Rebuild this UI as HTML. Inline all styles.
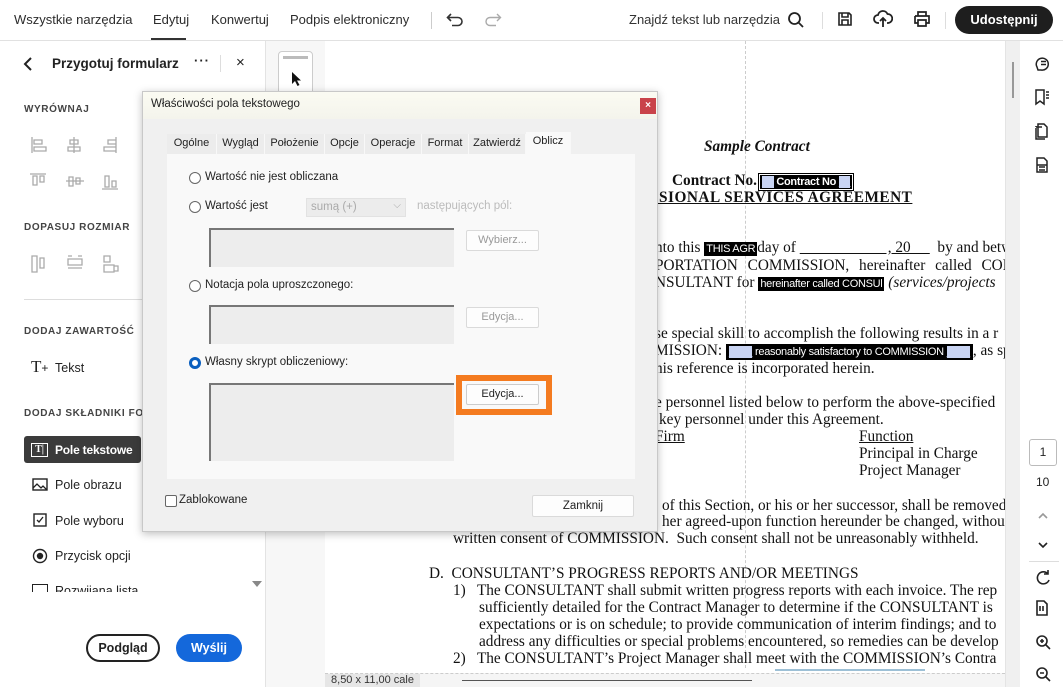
<!DOCTYPE html>
<html><head><meta charset="utf-8"><style>
*{box-sizing:border-box;margin:0;padding:0}
body{width:1063px;height:687px;overflow:hidden;position:relative;background:#fff;font-family:"Liberation Sans",sans-serif;color:#222}
.a{position:absolute;white-space:nowrap}
.top{position:absolute;left:0;top:0;width:1063px;height:41px;border-bottom:1px solid #e1e1e1;background:#fff}
.nav{font-size:13px;top:12px;color:#2c2c2c}
.lbl{font-size:10px;font-weight:bold;letter-spacing:.6px;color:#444}
.li{font-size:12.5px;color:#222}
.doc{position:absolute;left:325px;top:41px;width:680px;height:632px;overflow:hidden;background:#fff}
.doc .a{font-family:"Liberation Serif",serif;font-size:15.3px;color:#111}
.fld{background:#000;color:#fff;font-family:"Liberation Sans",sans-serif!important;font-size:11px!important;padding:1px 2px;letter-spacing:-.3px}
.dlg{position:absolute;left:142px;top:91px;width:516px;height:441px;background:#f0f0f0;border:1px solid #c8c8c8;box-shadow:0 2px 8px rgba(0,0,0,.25);font-size:11px;color:#222}
.tab{position:absolute;top:42px;height:20px;font-size:11px;padding-top:3px;background:#ececec;border-right:1px solid #f8f8f8;text-align:center}
.btn{position:absolute;background:#fdfdfd;border:1px solid #dadada;border-radius:2px;font-size:11px;text-align:center;color:#999}
.box{position:absolute;background:#ededed;border-top:2px solid #777;border-left:2px solid #777}
.rad{position:absolute;width:12px;height:12px;border:1px solid #666;border-radius:50%;background:#fff}
.ic{position:absolute}
</style></head><body>

<div class="top">
 <div class="a nav" style="left:14px">Wszystkie narzędzia</div>
 <div class="a nav" style="left:153px">Edytuj</div>
 <div class="a" style="left:151px;top:38px;width:35px;height:2px;background:#333"></div>
 <div class="a nav" style="left:211px">Konwertuj</div>
 <div class="a nav" style="left:290px">Podpis elektroniczny</div>
 <div class="a" style="left:431px;top:12px;width:1px;height:17px;background:#ccc"></div>
 <svg class="ic" style="left:446px;top:12px" width="18" height="16" viewBox="0 0 18 16"><path d="M5 2 L1.5 5.5 L5 9 M1.5 5.5 H12 a4 4 0 0 1 0 8 H6" fill="none" stroke="#333" stroke-width="1.6"/></svg>
 <svg class="ic" style="left:484px;top:12px" width="18" height="16" viewBox="0 0 18 16"><path d="M13 2 L16.5 5.5 L13 9 M16.5 5.5 H6 a4 4 0 0 0 0 8 H12" fill="none" stroke="#aaa" stroke-width="1.4"/></svg>
 <div class="a nav" style="left:629px;color:#333">Znajdź tekst lub narzędzia</div>
 <svg class="ic" style="left:787px;top:11px" width="18" height="18" viewBox="0 0 18 18"><circle cx="7.5" cy="7.5" r="5.5" fill="none" stroke="#222" stroke-width="1.8"/><path d="M11.5 11.5 L16 16" stroke="#222" stroke-width="1.8"/></svg>
 <div class="a" style="left:822px;top:12px;width:1px;height:17px;background:#ddd"></div>
 <svg class="ic" style="left:837px;top:11px" width="16" height="16" viewBox="0 0 16 16"><path d="M2 2h10l2 2v10H2z M5 2v4h6V2 M5 14V9h6v5" fill="none" stroke="#222" stroke-width="1.6"/></svg>
 <svg class="ic" style="left:873px;top:10px" width="20" height="18" viewBox="0 0 20 18"><path d="M6 13H5a4 4 0 0 1 0-8 5 5 0 0 1 9.5-1A4 4 0 0 1 15 13h-1 M10 17V8 M7 11l3-3 3 3" fill="none" stroke="#222" stroke-width="1.8"/></svg>
 <svg class="ic" style="left:913px;top:10px" width="18" height="18" viewBox="0 0 18 18"><path d="M5 6V2h8v4 M2 6h14v7h-3 M5 13H2V6 M5 10h8v6H5z" fill="none" stroke="#222" stroke-width="1.7"/></svg>
 <div class="a" style="left:945px;top:12px;width:1px;height:17px;background:#ddd"></div>
 <div class="a" style="left:955px;top:6px;width:98px;height:28px;border-radius:14px;background:#1e1e1e;color:#fff;font-size:13px;font-weight:bold;text-align:center;line-height:27px">Udostępnij</div>
</div>

<!-- left panel -->
<div class="a" style="left:265px;top:41px;width:60px;height:646px;background:#f7f7f7;border-left:1px solid #e3e3e3"></div>
<div class="a" style="left:278px;top:51px;width:35px;height:50px;border:1px solid #ccc;border-radius:4px;background:#fff"></div>
<div class="a" style="left:283px;top:56px;width:25px;height:3px;background:#bbb"></div>
<svg class="ic" style="left:291px;top:71px" width="12" height="16" viewBox="0 0 12 16"><path d="M1 1v12l3-3 2.5 5 2-1-2.5-4.5H10z" fill="#111"/></svg>

<svg class="ic" style="left:22px;top:56px" width="12" height="16" viewBox="0 0 12 16"><path d="M9 2L3 8l6 6" fill="none" stroke="#222" stroke-width="2"/></svg>
<div class="a" style="left:52px;top:56px;font-size:13.5px;font-weight:bold">Przygotuj formularz</div>
<div class="a" style="left:194px;top:53px;font-size:13px;font-weight:bold;letter-spacing:1px">···</div>
<div class="a" style="left:220px;top:55px;width:1px;height:17px;background:#ddd"></div>
<div class="a" style="left:236px;top:54px;font-size:15px">×</div>
<div class="a lbl" style="left:24px;top:104px">WYRÓWNAJ</div>
<div class="a lbl" style="left:24px;top:222px">DOPASUJ ROZMIAR</div>
<svg class="ic" style="left:30px;top:137px" width="100" height="140" viewBox="0 0 100 140" fill="none" stroke="#aaa" stroke-width="1.3">
<path d="M2 0v16 M4 3h8v4H4z M4 10h12v4H4z"/><path d="M44 0v16 M40 3h8v4h-8z M38 10h12v4H38z"/><path d="M86 0v16 M78 3h8v4h-8z M74 10h12v4H74z"/>
<path d="M0 37h16 M3 39v9h4v-9z M10 39v6h4v-6z"/><path d="M36 44h18 M39 40v9h4v-9z M46 41v6h4v-6z"/><path d="M72 52h16 M75 39v11h4V39z M82 44v6h4v-6z"/>
<path d="M2 119v16h5v-16z M10 121v10h4v-10z"/><path d="M38 122h14v6H38z M38 119h4 M48 119h4 M38 131h14"/><path d="M74 119v6h6v-6z M74 128h10v7H74z M84 129h4v5h-4"/>
</svg>
<div class="a" style="left:24px;top:299px;width:241px;height:1px;background:#ddd"></div>
<div class="a lbl" style="left:24px;top:326px">DODAJ ZAWARTOŚĆ</div>
<div class="a" style="left:31px;top:357px;font-family:'Liberation Serif',serif;font-size:17px">T<span style="font-size:12px;font-family:'Liberation Sans'">+</span></div>
<div class="a li" style="left:55px;top:361px">Tekst</div>
<div class="a lbl" style="left:24px;top:408px">DODAJ SKŁADNIKI FORM</div>
<div class="a" style="left:24px;top:436px;width:117px;height:27px;background:#3b3b3b;border-radius:3px"></div>
<div class="a" style="left:31px;top:443px;width:17px;height:14px;border:1.5px solid #fff;color:#fff;font-size:10px;font-weight:bold;line-height:11px;text-align:center;font-family:'Liberation Serif'">T|</div>
<div class="a li" style="left:55px;top:443px;color:#fff;font-weight:bold;font-size:12px;letter-spacing:-.2px">Pole tekstowe</div>
<svg class="ic" style="left:32px;top:478px" width="16" height="14" viewBox="0 0 16 14"><rect x="1" y="1" width="14" height="11" fill="none" stroke="#222" stroke-width="1.4"/><path d="M1 10l4-4 4 4 2-2 4 4" fill="none" stroke="#222" stroke-width="1.3"/></svg>
<div class="a li" style="left:55px;top:478px">Pole obrazu</div>
<svg class="ic" style="left:33px;top:513px" width="14" height="14" viewBox="0 0 14 14"><rect x="1" y="1" width="12" height="12" fill="none" stroke="#222" stroke-width="1.4"/><path d="M4 7l2 2 4-5" fill="none" stroke="#222" stroke-width="1.3"/></svg>
<div class="a li" style="left:55px;top:514px">Pole wyboru</div>
<svg class="ic" style="left:32px;top:548px" width="16" height="16" viewBox="0 0 16 16"><circle cx="8" cy="8" r="6.5" fill="none" stroke="#222" stroke-width="1.4"/><circle cx="8" cy="8" r="3.2" fill="#222"/></svg>
<div class="a li" style="left:55px;top:549px">Przycisk opcji</div>
<div class="a" style="left:0;top:584px;width:265px;height:8px;overflow:hidden"><div class="a li" style="left:55px;top:0">Rozwijana lista</div><div class="a" style="left:32px;top:0;width:16px;height:10px;border:1.4px solid #222"></div></div>
<div class="a" style="left:252px;top:581px;width:0;height:0;border-left:5px solid transparent;border-right:5px solid transparent;border-top:6px solid #888"></div>
<div class="a" style="left:86px;top:634px;width:74px;height:28px;border:2px solid #222;border-radius:14px;font-size:12.5px;font-weight:bold;text-align:center;line-height:24px">Podgląd</div>
<div class="a" style="left:176px;top:634px;width:66px;height:28px;background:#1468db;border-radius:14px;color:#fff;font-size:12.5px;font-weight:bold;text-align:center;line-height:28px">Wyślij</div>

<!-- document -->
<div class="doc">
 <div class="a" style="left:420px;top:0;width:0;height:632px;border-left:1px dashed #ccc"></div>
 <div class="a" style="left:379px;top:97px;font-style:italic;font-weight:bold">Sample Contract</div>
 <div class="a" style="left:347px;top:131px;font-weight:bold">Contract No.<span class="fld" style="margin-left:2px;background:#000;border:1px solid #fff;outline:1px solid #000"><span style="background:#c9d4f3;color:#c9d4f3">__</span> Contract No <span style="background:#c9d4f3;color:#c9d4f3">__</span></span></div>
 <div class="a" style="left:325px;top:148px;font-weight:bold;text-decoration:underline;letter-spacing:.5px">SSIONAL SERVICES AGREEMENT</div>
 <div class="a" style="left:330px;top:198px">nto this <span class="fld">THIS AGR</span>day of <u>&nbsp;&nbsp;&nbsp;&nbsp;&nbsp;&nbsp;&nbsp;&nbsp;&nbsp;&nbsp;&nbsp;&nbsp;&nbsp;&nbsp;&nbsp;&nbsp;&nbsp;&nbsp;&nbsp;&nbsp;&nbsp;&nbsp;&nbsp;, 20&nbsp;&nbsp;&nbsp;&nbsp;&nbsp;</u>&nbsp; by and betw</div>
 <div class="a" style="left:330px;top:216px;word-spacing:6px">PORTATION COMMISSION, hereinafter called CON</div>
 <div class="a" style="left:330px;top:233px">NSULTANT for <span class="fld">hereinafter called CONSUl</span> <i>(services/projects</i></div>
 <div class="a" style="left:330px;top:284px">se special skill to accomplish the following results in a r</div>
 <div class="a" style="left:330px;top:301px">MISSION: <span class="fld" style="border:1px solid #000"><span style="background:#c9d4f3;color:#c9d4f3">____</span> reasonably satisfactory to COMMISSION <span style="background:#c9d4f3;color:#c9d4f3">____</span></span>, as spec</div>
 <div class="a" style="left:330px;top:319px">his reference is incorporated herein.</div>
 <div class="a" style="left:330px;top:353px">e personnel listed below to perform the above-specified</div>
 <div class="a" style="left:334px;top:370px">key personnel under this Agreement.</div>
 <div class="a" style="left:330px;top:387px;text-decoration:underline">Firm</div>
 <div class="a" style="left:534px;top:387px;text-decoration:underline">Function</div>
 <div class="a" style="left:534px;top:404px">Principal in Charge</div>
 <div class="a" style="left:534px;top:421px">Project Manager</div>
 <div class="a" style="left:337px;top:456px">of this Section, or his or her successor, shall be removed</div>
 <div class="a" style="left:337px;top:472px">her agreed-upon function hereunder be changed, without</div>
 <div class="a" style="left:128px;top:489px">written consent of COMMISSION.&nbsp; Such consent shall not be unreasonably withheld.</div>
 <div class="a" style="left:104px;top:524px">D.&nbsp; CONSULTANT’S PROGRESS REPORTS AND/OR MEETINGS</div>
 <div class="a" style="left:128px;top:541px">1)&nbsp;&nbsp; The CONSULTANT shall submit written progress reports with each invoice. The rep</div>
 <div class="a" style="left:154px;top:558px">sufficiently detailed for the Contract Manager to determine if the CONSULTANT is</div>
 <div class="a" style="left:154px;top:575px">expectations or is on schedule; to provide communication of interim findings; and to</div>
 <div class="a" style="left:154px;top:592px">address any difficulties or special problems encountered, so remedies can be develop</div>
 <div class="a" style="left:128px;top:609px">2)&nbsp;&nbsp; The CONSULTANT’s Project Manager shall meet with the COMMISSION’s Contra</div>
 <div class="a" style="left:0;top:628px;width:680px;height:4px;background:#fff"></div>
 <div class="a" style="left:450px;top:628px;width:150px;height:2px;background:#9dc0d6"></div>
</div>
<div class="a" style="left:325px;top:673px;width:680px;height:14px;background:#f5f5f5;border-top:1px dashed #ccc"></div>
<div class="a" style="left:325px;top:674px;width:95px;height:13px;background:#e6e6e6;font-size:11px;color:#333;text-align:center">8,50 x 11,00 cale</div>
<div class="a" style="left:462px;top:680px;width:290px;height:1px;background:#555"></div>
<div class="a" style="left:1005px;top:41px;width:15px;height:646px;background:#f0f0f0;border-left:1px solid #e4e4e4"></div>
<div class="a" style="left:1012px;top:62px;width:2px;height:36px;background:#999"></div>

<!-- right rail -->
<svg class="ic" style="left:1033px;top:55px" width="18" height="120" viewBox="0 0 18 120" fill="none" stroke="#222" stroke-width="1.5">
<path d="M4 12a6 6 0 1 1 4 3H5z M8 6.5h5 M8 9.5h5"/>
<path d="M3 35v14l4-3 4 3V35z M13 37h3 M13 40h3 M13 43h3"/>
<path d="M3 72h6 M3 72v-1 M5 70V82h9V72l-3-3H5z M3 73v11h9"/>
<path d="M4 103h7l3 3v11H4z M6 112h6 M6 115h6 M4 110h10"/>
</svg>
<div class="a" style="left:1029px;top:439px;width:28px;height:27px;border:1px solid #bbb;border-radius:3px;font-size:12px;text-align:center;line-height:25px">1</div>
<div class="a" style="left:1036px;top:475px;font-size:12px">10</div>
<svg class="ic" style="left:1037px;top:510px" width="12" height="40" viewBox="0 0 12 40" fill="none" stroke-width="1.6"><path d="M2 8l4-4 4 4" stroke="#999"/><path d="M2 33l4 4 4-4" stroke="#222"/></svg>
<div class="a" style="left:1029px;top:561px;width:30px;height:1px;background:#ddd"></div>
<svg class="ic" style="left:1034px;top:568px" width="18" height="118" viewBox="0 0 18 118" fill="none" stroke="#222" stroke-width="1.6">
<path d="M14 6a6 6 0 1 0 1 6 M14 2v4h-4"/>
<path d="M3 33h7l3 3v11H3z M6 43v-5 M9 43v-5"/>
<circle cx="8" cy="73" r="5"/><path d="M12 77l4 4 M6 73h4 M8 71v4"/>
<circle cx="8" cy="105" r="5"/><path d="M12 109l4 4 M6 105h4"/>
</svg>

<!-- dialog -->
<div class="dlg">
 <div class="a" style="left:0;top:0;width:514px;height:27px;background:linear-gradient(#fbfbf2,#f4f4ec)"></div>
 <div class="a" style="left:8px;top:6px;font-size:11.5px">Właściwości pola tekstowego</div>
 <div class="a" style="left:497px;top:6px;width:16px;height:16px;background:#c9434a;color:#fff;font-size:10px;text-align:center;line-height:15px;font-weight:bold">×</div>
 <div class="a" style="left:24px;top:62px;width:468px;height:325px;background:#f9f9f9"></div>
 <div class="tab" style="left:24px;width:50px">Ogólne</div>
 <div class="tab" style="left:74px;width:48px">Wygląd</div>
 <div class="tab" style="left:122px;width:60px">Położenie</div>
 <div class="tab" style="left:182px;width:40px">Opcje</div>
 <div class="tab" style="left:222px;width:57px">Operacje</div>
 <div class="tab" style="left:279px;width:47px">Format</div>
 <div class="tab" style="left:326px;width:57px">Zatwierdź</div>
 <div class="tab" style="left:383px;width:45px;top:40px;height:22px;background:#f9f9f9;padding-top:3px">Oblicz</div>

 <div class="rad" style="left:46px;top:80px"></div><div class="a" style="left:62px;top:79px;font-size:11.5px">Wartość nie jest obliczana</div>
 <div class="rad" style="left:46px;top:109px"></div><div class="a" style="left:62px;top:108px;font-size:11.5px">Wartość jest</div>
 <div class="a" style="left:163px;top:106px;width:100px;height:19px;background:#ececec;border:1px solid #e2e2e2;color:#aaa;font-size:11.5px;padding:2px 4px">sumą (+)<span style="position:absolute;right:4px;top:1px;font-size:10px">⌵</span></div>
 <div class="a" style="left:274px;top:108px;font-size:11.5px;color:#bbb">następujących pól:</div>
 <div class="box" style="left:66px;top:136px;width:245px;height:39px"></div>
 <div class="btn" style="left:323px;top:138px;width:73px;height:21px;line-height:19px">Wybierz...</div>
 <div class="rad" style="left:46px;top:188px"></div><div class="a" style="left:62px;top:187px;font-size:11.5px">Notacja pola uproszczonego:</div>
 <div class="box" style="left:66px;top:213px;width:245px;height:39px"></div>
 <div class="btn" style="left:323px;top:215px;width:73px;height:21px;line-height:19px">Edycja...</div>
 <div class="rad" style="left:46px;top:265px;border:3.5px solid #0a5fbf"></div><div class="a" style="left:62px;top:264px;font-size:11.5px">Własny skrypt obliczeniowy:</div>
 <div class="box" style="left:66px;top:291px;width:245px;height:78px"></div>
 <div class="a" style="left:313px;top:283px;width:96px;height:40px;border:6px solid #f47b20"></div>
 <div class="btn" style="left:323px;top:292px;width:73px;height:21px;line-height:19px;color:#222;border-color:#ccc">Edycja...</div>
 <div class="a" style="left:22px;top:403px;width:12px;height:12px;border:1px solid #666;border-radius:2px;background:#fff"></div>
 <div class="a" style="left:36px;top:402px;font-size:11.5px">Zablokowane</div>
 <div class="btn" style="left:389px;top:403px;width:102px;height:22px;line-height:20px;color:#222;font-size:11.5px">Zamknij</div>
</div>
</body></html>
